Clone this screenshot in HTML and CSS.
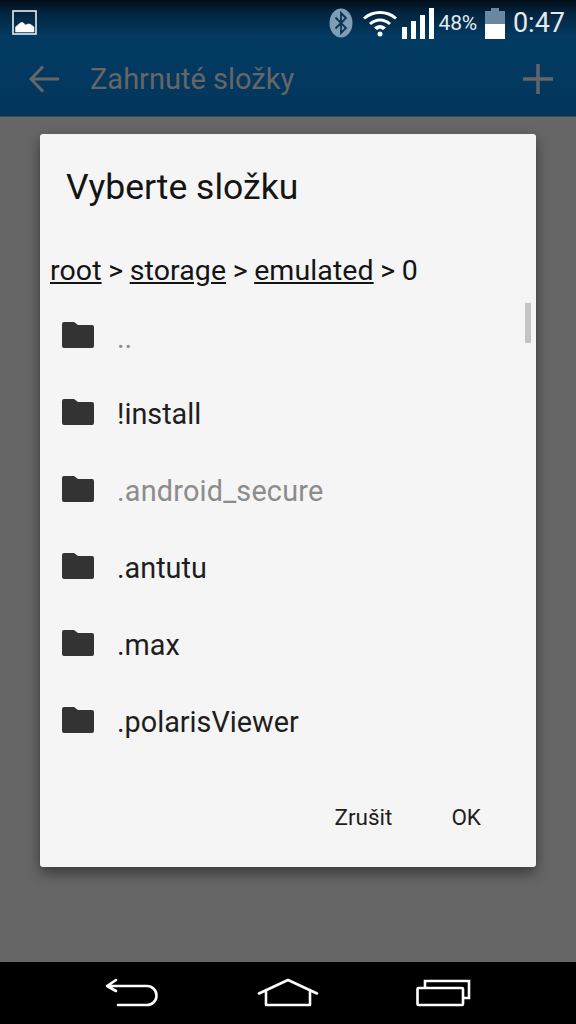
FILE: index.html
```html
<!DOCTYPE html>
<html lang="cs">
<head>
<meta charset="utf-8">
<title>Vyberte složku</title>
<link rel="stylesheet" href="styles.css">
</head>
<body>
<div class="screen">
  <header class="top">
    <div class="status">
      <svg class="ic-pic" width="26" height="26" viewBox="0 0 26 26"><rect x="1" y="1" width="23" height="23" fill="none" stroke="#e8eef2" stroke-width="1.6"/><path d="M3.500 22V17L7 14L9 12.500L11 12.500L13.500 15L16 14L18 14L22 17V22Z" fill="#fff" stroke="#fff" stroke-width=".5"/></svg>
      <span class="spacer"></span>
      <svg width="24" height="30" viewBox="0 0 24 30"><ellipse cx="12" cy="15" rx="11.500" ry="14.500" fill="#7f9db5"/><path d="M6.500 9.500L17 20L12 25V5L17 10L6.500 20.500" fill="none" stroke="#0b3354" stroke-width="1.800"/></svg>
      <svg class="ic-wifi" width="36" height="28" viewBox="0 0 36 28"><path d="M2 9.500C11 1.500 25 1.500 34 9.500" fill="none" stroke="#fff" stroke-width="3"/><path d="M8 15C14 9.500 22 9.500 28 15" fill="none" stroke="#fff" stroke-width="3"/><path d="M12 18.500C15.500 15 20.500 15 24 18.500L21 21L18 19.500L15 21Z" fill="#fff"/><circle cx="18" cy="25" r="2.500" fill="#fff"/></svg>
      <svg class="ic-sig" width="32" height="31" viewBox="0 0 32 31"><path d="M0 19h5v12H0zM9 13h5v18H9zM18 7h5v24h-5zM27 0h5v31h-5z" fill="#fff"/></svg>
      <span class="pct">48%</span>
      <svg class="ic-bat" width="20" height="31" viewBox="0 0 20 31"><path d="M6 0h8v3h6v14H0V3h6z" fill="#6c88a0"/><rect y="16" width="20" height="15" fill="#fff"/></svg>
      <span class="clock">0:47</span>
    </div>
    <div class="bar">
      <svg class="ic-back" width="32" height="30" viewBox="0 0 32 30"><path d="M14 2.500L2 15L14 27.500M2 15H30" fill="none" stroke="#666" stroke-width="3"/></svg>
      <span class="bar-title">Zahrnuté složky</span>
      <svg class="ic-plus" width="30" height="30" viewBox="0 0 30 30"><path d="M15 0V30M0 15H30" fill="none" stroke="#666" stroke-width="3.400"/></svg>
    </div>
  </header>
  <main class="scrim">
    <section class="dialog">
      <h1 class="d-title">Vyberte složku</h1>
      <div class="crumbs"><u>root</u> &gt; <u>storage</u> &gt; <u>emulated</u> &gt; 0</div>
      <span class="thumb"></span>
      <ul class="list">
        <li class="row"><svg class="folder" viewBox="0 0 32 26"><path d="M2 0H12L16 3H30A2 2 0 0 1 32 5V24A2 2 0 0 1 30 26H2A2 2 0 0 1 0 24V2A2 2 0 0 1 2 0Z"/></svg><span class="name up">..</span></li>
        <li class="row"><svg class="folder" viewBox="0 0 32 26"><path d="M2 0H12L16 3H30A2 2 0 0 1 32 5V24A2 2 0 0 1 30 26H2A2 2 0 0 1 0 24V2A2 2 0 0 1 2 0Z"/></svg><span class="name">!install</span></li>
        <li class="row"><svg class="folder" viewBox="0 0 32 26"><path d="M2 0H12L16 3H30A2 2 0 0 1 32 5V24A2 2 0 0 1 30 26H2A2 2 0 0 1 0 24V2A2 2 0 0 1 2 0Z"/></svg><span class="name dim">.android_secure</span></li>
        <li class="row"><svg class="folder" viewBox="0 0 32 26"><path d="M2 0H12L16 3H30A2 2 0 0 1 32 5V24A2 2 0 0 1 30 26H2A2 2 0 0 1 0 24V2A2 2 0 0 1 2 0Z"/></svg><span class="name">.antutu</span></li>
        <li class="row"><svg class="folder" viewBox="0 0 32 26"><path d="M2 0H12L16 3H30A2 2 0 0 1 32 5V24A2 2 0 0 1 30 26H2A2 2 0 0 1 0 24V2A2 2 0 0 1 2 0Z"/></svg><span class="name">.max</span></li>
        <li class="row"><svg class="folder" viewBox="0 0 32 26"><path d="M2 0H12L16 3H30A2 2 0 0 1 32 5V24A2 2 0 0 1 30 26H2A2 2 0 0 1 0 24V2A2 2 0 0 1 2 0Z"/></svg><span class="name">.polarisViewer</span></li>
      </ul>
      <div class="actions"><span>Zrušit</span><span>OK</span></div>
    </section>
  </main>
  <nav class="nav">
    <svg width="56" height="30" viewBox="0 0 56 30"><path d="M11 2L2 8L11 13M2 8H42A9.500 9.500 0 0 1 42 27H13" fill="none" stroke="#fff" stroke-width="2.600" stroke-linecap="round" stroke-linejoin="round"/></svg>
    <svg width="62" height="30" viewBox="0 0 62 30"><path d="M2 15.500L31 2L60 15.500M9 13V27H53V13" fill="none" stroke="#fff" stroke-width="2.600" stroke-linecap="round" stroke-linejoin="round"/></svg>
    <svg width="56" height="28" viewBox="0 0 56 28"><rect x="2.500" y="9" width="45.500" height="17" rx="1" fill="none" stroke="#fff" stroke-width="2.600"/><path d="M10 8V2H54V19H48" fill="none" stroke="#fff" stroke-width="2.600"/></svg>
  </nav>
</div>
</body>
</html>
```
FILE: styles.css
```css
* { box-sizing: border-box; }
html, body { margin: 0; padding: 0; }
body { font-family: Roboto, "Liberation Sans", sans-serif; background: #666; }
.screen { width: 576px; height: 1024px; display: flex; flex-direction: column; overflow: hidden; }
.top { height: 117px; flex: none; background: linear-gradient(#020d16 0, #03233c 12px, #033a62 36px, #033a62 60px, #03355a 117px); border-bottom: 1px solid #2f4c63; }
.status { height: 41px; display: flex; align-items: center; padding: 4px 11px 0 12px; color: #e4eaef; }
.spacer { flex: 1; }
.ic-wifi { margin-left: 9px; }
.ic-sig { margin-left: 4px; margin-top: 2px; }
.pct { font-size: 21px; margin-left: 5px; letter-spacing: -.2px; }
.ic-bat { margin-left: 8px; margin-top: 2px; }
.clock { font-size: 27px; margin-left: 8px; }
.bar { height: 75px; display: flex; align-items: center; padding: 0 23px 0 29px; }
.bar-title { flex: 1; margin-left: 29px; font-size: 29px; color: #666; }
.scrim { flex: 1; background: #666; padding: 17px 40px 0; }
.dialog { position: relative; height: 733px; background: #f5f5f5; border-radius: 3px; box-shadow: 0 6px 14px rgba(0,0,0,.45); display: flex; flex-direction: column; }
.d-title { margin: 33px 0 0 26px; font-size: 35.500px; line-height: 40px; font-weight: 400; color: #141414; }
.crumbs { margin: 47px 0 0 10px; font-size: 28.500px; line-height: 34px; color: #141414; word-spacing: -.5px; }
.crumbs u { letter-spacing: .1px; }
.thumb { position: absolute; left: 485px; top: 169px; width: 6px; height: 40px; background: #c4c4c4; }
.list { list-style: none; margin: 10px 0 0; padding: 0; }
.row { height: 77px; display: flex; align-items: center; padding-left: 22px; }
.folder { width: 32px; height: 26px; fill: #333; margin-top: -3px; }
.name { margin-left: 23px; font-size: 28.800px; color: #1e1e1e; }
.dim { color: #8c8c8c; letter-spacing: .2px; }
.up { color: #8c8c8c; margin-top: 3px; }
.actions { display: flex; justify-content: flex-end; gap: 59px; padding: 44px 55px 0 0; font-size: 22.500px; color: #1e1e1e; }
.nav { height: 62px; flex: none; background: #000; display: flex; align-items: center; padding: 0 105px; justify-content: space-between; }
```
